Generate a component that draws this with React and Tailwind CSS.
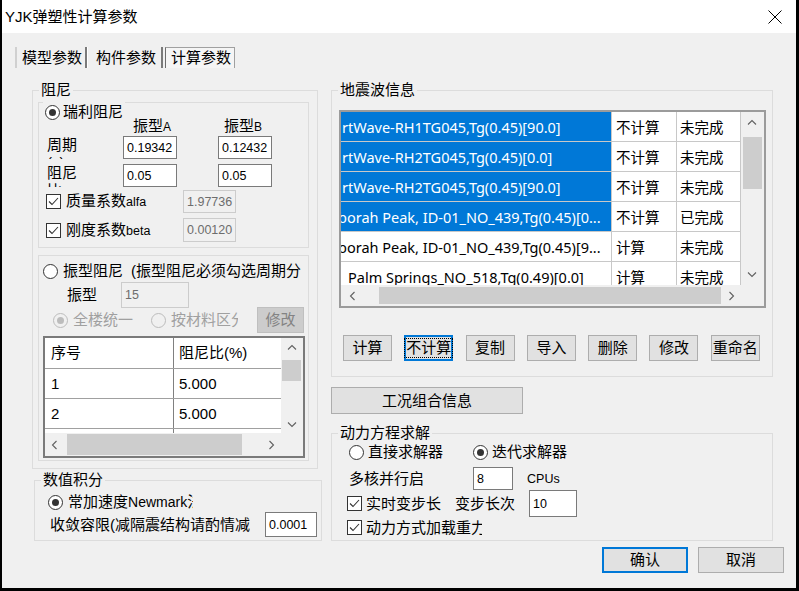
import React from 'react'

const waves = [
  { name: 'rtWave-RH1TG045,Tg(0.45)[90.0]', calc: '不计算', st: '未完成', sel: true },
  { name: 'rtWave-RH2TG045,Tg(0.45)[0.0]', calc: '不计算', st: '未完成', sel: true },
  { name: 'rtWave-RH2TG045,Tg(0.45)[90.0]', calc: '不计算', st: '未完成', sel: true },
  { name: 'borah Peak, ID-01_NO_439,Tg(0.45)[0...', calc: '不计算', st: '已完成', sel: true, cut: true },
  { name: 'borah Peak, ID-01_NO_439,Tg(0.45)[9...', calc: '计算', st: '未完成', cut: true },
  { name: 'Palm Springs_NO_518,Tg(0.49)[0.0]', calc: '计算', st: '未完成', pad: true },
]

const buttons = ['计算', '不计算', '复制', '导入', '删除', '修改', '重命名']

function Radio({ on, off }) {
  return (
    <span className={`w-[15px] h-[15px] rounded-full border flex items-center justify-center shrink-0 ${off ? 'border-[#bcbcbc] bg-[#f0f0f0]' : 'border-[#333333] bg-white'}`}>
      {on && <span className={`w-[7px] h-[7px] rounded-full ${off ? 'bg-[#bcbcbc]' : 'bg-[#333333]'}`} />}
    </span>
  )
}

function Check() {
  return (
    <span className="w-[15px] h-[15px] border border-[#333333] bg-white flex items-center justify-center shrink-0">
      <svg width="11" height="9" viewBox="0 0 11 9">
        <path d="M1 4.5 L4 7.5 L10 1" fill="none" stroke="#333333" strokeWidth="1.1" />
      </svg>
    </span>
  )
}

function Field({ value, className, off }) {
  return (
    <div className={`${className} shrink-0 flex items-center pl-[3px] text-[12.5px] font-['Liberation_Sans',sans-serif] border ${off ? 'bg-[#f0f0f0] border-[#cccccc] text-[#6d6d6d]' : 'bg-white border-[#7a7a7a] text-black'}`}>
      {value}
    </div>
  )
}

function Chev({ dir }) {
  const vert = dir === 'up' || dir === 'down'
  const d = { up: 'M1 5.5 L5 1.5 L9 5.5', down: 'M1 1.5 L5 5.5 L9 1.5', left: 'M5.5 1 L1.5 5 L5.5 9', right: 'M1.5 1 L5.5 5 L1.5 9' }[dir]
  const w = vert ? 10 : 7
  const h = vert ? 7 : 10
  return (
    <svg width={w} height={h} viewBox={`0 0 ${w} ${h}`}>
      <path d={d} fill="none" stroke="#606060" strokeWidth="1.1" />
    </svg>
  )
}

function Group({ title, className, children }) {
  return (
    <div className={`relative border border-[#dcdcdc] shrink-0 ${className}`}>
      <span className="absolute -top-[11px] left-[6px] px-[2px] bg-[#f0f0f0] leading-[20px] whitespace-nowrap">{title}</span>
      {children}
    </div>
  )
}

function Btn({ children, className, focus }) {
  return (
    <div className={`shrink-0 flex items-center justify-center bg-[#e1e1e1] ${focus ? 'border-2 border-[#0078d7]' : 'border border-[#adadad]'} ${className}`}>
      {children}
    </div>
  )
}

export default function App() {
  return (
    <div className="w-[799px] h-[591px] bg-[#f0f0f0] border-l-2 border-r-[3px] border-b-[3px] border-black flex flex-col text-[15px] text-black leading-[20px] overflow-hidden font-['Liberation_Sans','Noto_Sans_CJK_SC',sans-serif]">
      {/* title bar */}
      <div className="h-[33px] bg-white flex items-center justify-between pl-[3px] pr-[14px] shrink-0">
        <span>YJK弹塑性计算参数</span>
        <svg width="14" height="14" viewBox="0 0 14 14">
          <path d="M0.5 0.5 L13.5 13.5 M13.5 0.5 L0.5 13.5" stroke="#000" strokeWidth="1" />
        </svg>
      </div>

      {/* tabs */}
      <div className="flex h-[21px] mt-[14px] ml-[13px] shrink-0">
        <div className="flex items-center border-l-2 border-l-[#d0d0d0] pl-[5px] pr-[3px] border-r-2 border-r-[#7a7a7a]">模型参数</div>
        <div className="flex items-center border-l border-l-white pl-[8px] pr-[5px] border-r-2 border-r-[#7a7a7a]">构件参数</div>
        <div className="flex items-center ml-[2px] w-[70px] border border-b-0 border-[#a0a0a0] border-l-[#6d6d6d] bg-[#f5f5f5] pl-[5px]">计算参数</div>
      </div>

      <div className="flex mt-[22px] ml-[30px]">
        {/* left column */}
        <div className="w-[290px] flex flex-col shrink-0">
          <Group title="阻尼" className="w-[286px] h-[379px] flex flex-col">
            {/* Rayleigh */}
            <div className="relative w-[271px] h-[146px] border border-[#dcdcdc] mt-[11px] ml-[5px] shrink-0">
              <div className="absolute -top-[1px] left-[4px] px-[2px] bg-[#f0f0f0] flex items-center gap-[3px] h-[20px]">
                <Radio on />
                <span>瑞利阻尼</span>
              </div>
              <div className="pt-[15px] pl-[7px] flex flex-col">
                <div className="flex h-[16px] items-center leading-[16px]">
                  <span className="ml-[87px]">振型<span className="text-[12px]">A</span></span>
                  <span className="ml-[53px]">振型<span className="text-[12px]">B</span></span>
                </div>
                <div className="flex items-start mt-[2px] h-[23px]">
                  <div className="ml-[1px] w-[32px] h-[23px] leading-[18px] overflow-hidden">周期(s)</div>
                  <Field value="0.19342" className="ml-[44px] w-[54px] h-[23px]" />
                  <Field value="0.12432" className="ml-[41px] w-[54px] h-[23px]" />
                </div>
                <div className="flex items-start mt-[5px] h-[23px]">
                  <div className="ml-[1px] w-[32px] h-[23px] leading-[18px] overflow-hidden">阻尼比</div>
                  <Field value="0.05" className="ml-[44px] w-[54px] h-[23px]" />
                  <Field value="0.05" className="ml-[41px] w-[54px] h-[23px]" />
                </div>
                <div className="flex items-center mt-[3px] h-[23px]">
                  <div className="w-[137px] flex items-center gap-[5px]">
                    <Check />
                    <span>质量系数<span className="text-[12.5px]">alfa</span></span>
                  </div>
                  <Field value="1.97736" off className="w-[53px] h-[23px]" />
                </div>
                <div className="flex items-center mt-[5px] h-[24px]">
                  <div className="w-[137px] flex items-center gap-[5px]">
                    <Check />
                    <span>刚度系数<span className="text-[12.5px]">beta</span></span>
                  </div>
                  <Field value="0.00120" off className="w-[53px] h-[24px]" />
                </div>
              </div>
            </div>

            {/* modal damping */}
            <div className="w-[271px] h-[206px] border border-[#dcdcdc] mt-[7px] ml-[5px] flex flex-col shrink-0">
              <div className="flex items-center h-[20px] mt-[5px] ml-[4px] w-[258px] overflow-hidden whitespace-nowrap shrink-0">
                <Radio />
                <span className="ml-[5px]">振型阻尼</span>
                <span className="ml-[8px]">(振型阻尼必须勾选周期分析)</span>
              </div>
              <div className="flex items-center h-[26px] mt-[1px] shrink-0">
                <span className="ml-[28px]">振型</span>
                <Field value="15" off className="ml-[24px] w-[68px] h-[26px]" />
              </div>
              <div className="flex items-center h-[26px] -mt-[1px] shrink-0 text-[#a0a0a0]">
                <span className="ml-[14px]"><Radio on off /></span>
                <span className="ml-[5px]">全楼统一</span>
                <span className="ml-[18px]"><Radio off /></span>
                <span className="ml-[5px] w-[67px] overflow-hidden whitespace-nowrap">按材料区分</span>
                <div className="ml-[19px] w-[47px] h-[26px] bg-[#cccccc] border border-[#bfbfbf] text-[#838383] flex items-center justify-center">修改</div>
              </div>
              <div className="mt-[3px] ml-[4px] w-[262px] h-[122px] border-2 border-[#7a7a7a] flex flex-col shrink-0">
                <div className="flex h-[95px] shrink-0">
                  <div className="w-[236px] bg-white overflow-hidden flex flex-col">
                    <div className="flex h-[31px] shrink-0 border-b border-[#a0a0a0]">
                      <div className="w-[129px] border-r border-[#808080] pl-[6px] flex items-center">序号</div>
                      <div className="flex-1 pl-[5px] flex items-center">阻尼比(%)</div>
                    </div>
                    {['1', '2', ''].map((n, i) => (
                      <div key={i} className="flex h-[30px] shrink-0 border-b border-[#a0a0a0]">
                        <div className="w-[129px] border-r border-[#808080] pl-[6px] flex items-center">{n}</div>
                        <div className="flex-1 pl-[5px] flex items-center">{n && '5.000'}</div>
                      </div>
                    ))}
                  </div>
                  <div className="w-[21px] bg-[#f0f0f0] flex flex-col">
                    <div className="h-[18px] flex items-center justify-center"><Chev dir="up" /></div>
                    <div className="mt-[4px] mx-[1px] h-[21px] bg-[#cdcdcd]" />
                    <div className="flex-1" />
                    <div className="h-[18px] flex items-center justify-center"><Chev dir="down" /></div>
                  </div>
                </div>
                <div className="flex flex-1 bg-[#f0f0f0]">
                  <div className="w-[18px] flex items-center justify-center"><Chev dir="left" /></div>
                  <div className="ml-[4px] w-[175px] my-[1px] bg-[#cdcdcd]" />
                  <div className="flex-1" />
                  <div className="w-[22px] flex items-center justify-center"><Chev dir="right" /></div>
                  <div className="w-[21px]" />
                </div>
              </div>
            </div>
          </Group>

          <Group title="数值积分" className="w-[288px] h-[61px] mt-[11px] ml-[2px] flex flex-col">
            <div className="flex items-center h-[20px] mt-[11px] shrink-0">
              <span className="ml-[13px]"><Radio on /></span>
              <span className="ml-[5px] w-[125px] overflow-hidden whitespace-nowrap">常加速度<span className="text-[14px]">Newmark</span>法</span>
            </div>
            <div className="flex items-center h-[25px] shrink-0">
              <span className="ml-[15px] w-[200px] overflow-hidden whitespace-nowrap">收敛容限(减隔震结构请酌情减小)</span>
              <Field value="0.0001" className="ml-[15px] w-[52px] h-[25px]" />
            </div>
          </Group>
        </div>

        {/* right column */}
        <div className="w-[442px] ml-[9px] flex flex-col shrink-0">
          <Group title="地震波信息" className="w-[442px] h-[287px] flex flex-col">
            <div className="mt-[19px] ml-[7px] w-[427px] h-[198px] border-2 border-[#9b9b9b] flex flex-col shrink-0">
              <div className="flex h-[173px] shrink-0">
                <div className="w-[400px] bg-white overflow-hidden flex flex-col font-['Noto_Sans','Noto_Sans_CJK_SC',sans-serif] text-[14.5px]">
                  {waves.map((w, i) => (
                    <div key={i} className="flex h-[30px] shrink-0 border-b border-[#c8c8c8]">
                      <div className={`w-[271px] border-r border-[#c8c8c8] flex items-center overflow-hidden whitespace-nowrap ${w.sel ? 'bg-[#0078d7] text-white' : ''}`}>
                        <span className={w.cut ? '-ml-[3px]' : w.pad ? 'ml-[7px]' : 'ml-[1px]'}>{w.name}</span>
                      </div>
                      <div className="w-[65px] border-r border-[#c8c8c8] pl-[4px] flex items-center">{w.calc}</div>
                      <div className="w-[64px] border-r border-[#c8c8c8] pl-[3px] flex items-center">{w.st}</div>
                    </div>
                  ))}
                </div>
                <div className="w-[22px] bg-[#f0f0f0] flex flex-col">
                  <div className="h-[20px] flex items-center justify-center"><Chev dir="up" /></div>
                  <div className="mt-[5px] ml-[2px] mr-[1px] h-[52px] bg-[#cdcdcd]" />
                  <div className="flex-1" />
                  <div className="h-[22px] flex items-center justify-center"><Chev dir="down" /></div>
                </div>
              </div>
              <div className="flex flex-1 bg-[#f0f0f0]">
                <div className="w-[22px] flex items-center justify-center"><Chev dir="left" /></div>
                <div className="ml-[16px] w-[342px] my-[2px] bg-[#cdcdcd]" />
                <div className="w-[20px] flex items-center justify-center"><Chev dir="right" /></div>
                <div className="w-[22px]" />
              </div>
            </div>
            <div className="flex gap-[12.3px] mt-[27px] ml-[11px] shrink-0">
              {buttons.map((b) => (
                <Btn key={b} focus={b === '不计算'} className="w-[49px] h-[26px] whitespace-nowrap">
                  {b === '不计算' ? <span className="border border-dotted border-black leading-[18px] px-[1px]">{b}</span> : b}
                </Btn>
              ))}
            </div>
          </Group>

          <Btn className="w-[192px] h-[27px] mt-[10px]">工况组合信息</Btn>

          <Group title="动力方程求解" className="w-[442px] h-[108px] mt-[19px] flex flex-col">
            <div className="flex items-center h-[20px] mt-[8px] shrink-0">
              <span className="ml-[17px]"><Radio /></span>
              <span className="ml-[4px]">直接求解器</span>
              <span className="ml-[30px]"><Radio on /></span>
              <span className="ml-[4px]">迭代求解器</span>
            </div>
            <div className="flex items-center h-[23px] mt-[5px] shrink-0">
              <span className="ml-[17px]">多核并行启</span>
              <Field value="8" className="ml-[49px] w-[40px] h-[23px]" />
              <span className="ml-[14px] text-[12.5px]">CPUs</span>
            </div>
            <div className="flex items-center h-[27px] shrink-0">
              <span className="ml-[15px]"><Check /></span>
              <span className="ml-[4px]">实时变步长</span>
              <span className="ml-[14px]">变步长次</span>
              <Field value="10" className="ml-[14px] w-[48px] h-[27px]" />
            </div>
            <div className="flex items-center h-[21px] shrink-0">
              <span className="ml-[15px]"><Check /></span>
              <span className="ml-[4px] w-[116px] overflow-hidden whitespace-nowrap">动力方式加载重力</span>
            </div>
          </Group>

          <div className="flex gap-[10px] mt-[6px] ml-[271px]">
            <Btn focus className="w-[86px] h-[26px]">确认</Btn>
            <Btn className="w-[86px] h-[26px]">取消</Btn>
          </div>
        </div>
      </div>
    </div>
  )
}
